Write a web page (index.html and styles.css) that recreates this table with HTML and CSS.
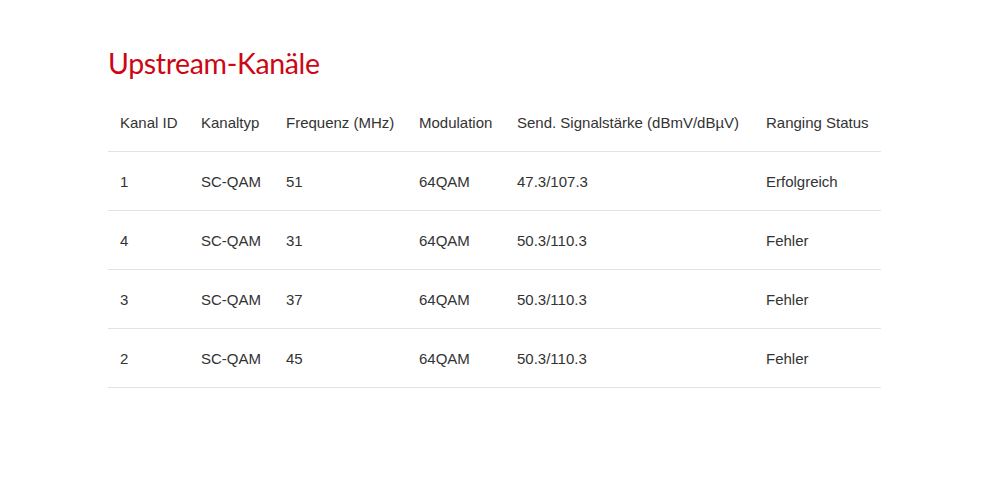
FILE: index.html
```html
<!DOCTYPE html>
<html lang="de">
<head>
<meta charset="utf-8">
<title>Upstream-Kanäle</title>
<link rel="stylesheet" href="styles.css">
</head>
<body>
<main class="page">
  <h2 class="title">Upstream-Kanäle</h2>
  <table class="channels">
    <colgroup>
      <col class="c1"><col class="c2"><col class="c3"><col class="c4"><col class="c5"><col class="c6">
    </colgroup>
    <thead>
      <tr><th>Kanal ID</th><th>Kanaltyp</th><th>Frequenz (MHz)</th><th>Modulation</th><th>Send. Signalstärke (dBmV/dBµV)</th><th>Ranging Status</th></tr>
    </thead>
    <tbody>
      <tr><td>1</td><td>SC-QAM</td><td>51</td><td>64QAM</td><td>47.3/107.3</td><td>Erfolgreich</td></tr>
      <tr><td>4</td><td>SC-QAM</td><td>31</td><td>64QAM</td><td>50.3/110.3</td><td>Fehler</td></tr>
      <tr><td>3</td><td>SC-QAM</td><td>37</td><td>64QAM</td><td>50.3/110.3</td><td>Fehler</td></tr>
      <tr><td>2</td><td>SC-QAM</td><td>45</td><td>64QAM</td><td>50.3/110.3</td><td>Fehler</td></tr>
    </tbody>
  </table>
</main>
</body>
</html>
```
FILE: styles.css
```css
html, body { margin: 0; padding: 0; background: #fff; }
body { font-family: "Liberation Sans", Arial, sans-serif; color: #333; }
.page { padding: 46px 0 0 108px; width: 773px; }
.title {
  margin: 0 0 13px 0;
  font-family: Lato, "Noto Sans", sans-serif;
  font-weight: 400;
  font-size: 28.5px;
  line-height: 34px;
  color: #cc0714;
  letter-spacing: -0.35px;
}
.channels { border-collapse: collapse; width: 773px; table-layout: fixed; font-size: 15px; }
.c1 { width: 81px; } .c2 { width: 85px; } .c3 { width: 133px; }
.c4 { width: 98px; } .c5 { width: 249px; } .c6 { width: 127px; }
.channels th, .channels td {
  text-align: left;
  font-weight: 400;
  padding: 2px 12px 0 12px;
  height: 56px;
  line-height: 18px;
  border-bottom: 1px solid #e3e3e3;
  white-space: nowrap;
  vertical-align: middle;
}
```
